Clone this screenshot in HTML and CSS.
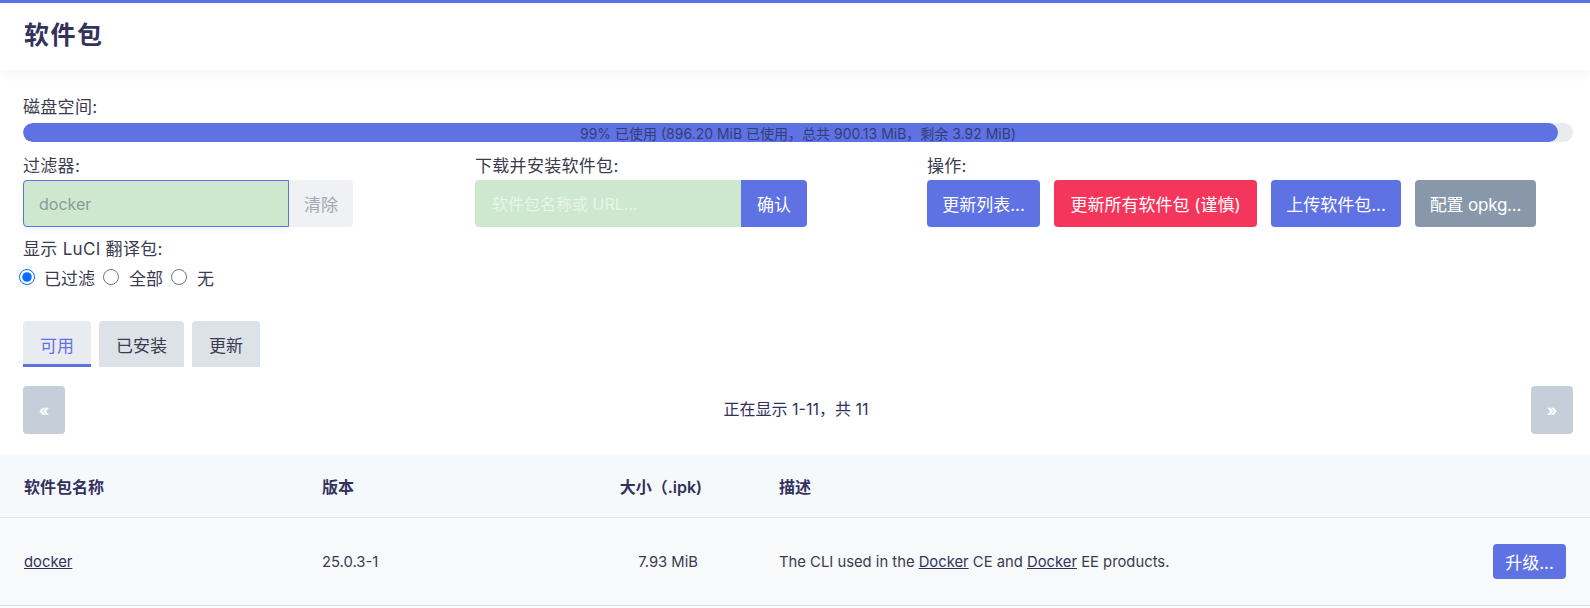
FILE: index.html
```html
<!DOCTYPE html>
<html lang="zh-CN">
<head>
<meta charset="utf-8">
<title>软件包</title>
<link rel="stylesheet" href="styles.css">
</head>
<body>
<header class="page-head">
  <h2 class="page-title">软件包</h2>
</header>
<main class="content">
  <div class="disk">
    <div class="lbl">磁盘空间:</div>
    <div class="progress">
      <div class="progress-fill" style="width:99.03%"></div>
      <span class="progress-text">99% 已使用 (896.20 MiB 已使用，总共 900.13 MiB，剩余 3.92 MiB)</span>
    </div>
  </div>

  <div class="controls">
    <div class="col">
      <div class="lbl">过滤器:</div>
      <div class="input-group">
        <input class="filter-input" type="text" value="docker">
        <button class="btn-clear" type="button">清除</button>
      </div>
      <div class="lbl lbl-luci">显示 LuCI 翻译包:</div>
      <div class="radios">
        <label class="radio"><input type="radio" name="i18n" checked><span>已过滤</span></label>
        <label class="radio"><input type="radio" name="i18n"><span>全部</span></label>
        <label class="radio"><input type="radio" name="i18n"><span>无</span></label>
      </div>
    </div>
    <div class="col">
      <div class="lbl">下载并安装软件包:</div>
      <div class="input-group">
        <input class="dl-input" type="text" placeholder="软件包名称或 URL...">
        <button class="btn btn-primary btn-attach" type="button">确认</button>
      </div>
    </div>
    <div class="col">
      <div class="lbl">操作:</div>
      <div class="actions">
        <button class="btn btn-primary" type="button">更新列表...</button>
        <button class="btn btn-danger" type="button">更新所有软件包 (谨慎)</button>
        <button class="btn btn-primary" type="button">上传软件包...</button>
        <button class="btn btn-neutral" type="button">配置 opkg...</button>
      </div>
    </div>
  </div>

  <ul class="tabs">
    <li class="tab active">可用</li>
    <li class="tab">已安装</li>
    <li class="tab">更新</li>
  </ul>

  <div class="pager">
    <button class="pager-btn" type="button">«</button>
    <div class="pager-text">正在显示 1-11，共 11</div>
    <button class="pager-btn" type="button">»</button>
  </div>
</main>

<div class="table">
  <div class="tr th">
    <div class="cell">软件包名称</div>
    <div class="cell">版本</div>
    <div class="cell cell-size">大小（.ipk)</div>
    <div class="cell cell-desc">描述</div>
    <div class="cell cell-act"></div>
  </div>
  <div class="tr td">
    <div class="cell"><a class="link" href="#">docker</a></div>
    <div class="cell">25.0.3-1</div>
    <div class="cell cell-size">7.93 MiB</div>
    <div class="cell cell-desc">The CLI used in the <a class="link" href="#">Docker</a> CE and <a class="link" href="#">Docker</a> EE products.</div>
    <div class="cell cell-act"><button class="btn btn-primary btn-sm" type="button">升级...</button></div>
  </div>
</div>
</body>
</html>
```

FILE: styles.css
```css
* { box-sizing: border-box; }

html, body {
  margin: 0;
  padding: 0;
  background: #fff;
}

body {
  font-family: "Inter", "Noto Sans CJK SC", sans-serif;
  color: #32325d;
  font-size: 16px;
  overflow: hidden;
}

.page-head {
  border-top: 3px solid #5e72e4;
  height: 70px;
  display: flex;
  align-items: center;
  padding-left: 24px;
  background: #fff;
  box-shadow: 0 5px 12px rgba(40, 50, 90, 0.045);
  position: relative;
}

.page-title {
  margin: 0;
  font-size: 25px;
  font-weight: 700;
  letter-spacing: 1.5px;
  color: #32325d;
  line-height: 1;
  transform: translateY(-1px);
}

.content {
  padding: 0 17px 0 23px;
}

.lbl {
  font-size: 17px;
  line-height: 20px;
  height: 20px;
  color: #3b3b4f;
  letter-spacing: 0.3px;
}

.disk {
  padding-top: 27px;
}

.progress {
  position: relative;
  margin-top: 6px;
  height: 19px;
  border-radius: 10px;
  background: #e9ecef;
  overflow: hidden;
}

.progress-fill {
  height: 100%;
  border-radius: 10px;
  background: #5e72e4;
}

.progress-text {
  position: absolute;
  inset: 0;
  display: flex;
  align-items: center;
  justify-content: center;
  font-size: 14px;
  color: #2e3466;
  opacity: 0.85;
}

.controls {
  display: grid;
  grid-template-columns: 452px 452px 1fr;
  margin-top: 14px;
}

.input-group {
  display: flex;
  margin-top: 4px;
  height: 47px;
}

.filter-input {
  width: 266px;
  height: 47px;
  border: 1px solid #5e72e4;
  border-radius: 4px 0 0 4px;
  background: #cde8cf;
  padding: 0 15px;
  font-family: inherit;
  font-size: 16px;
  color: #8c9a98;
  outline: none;
  box-shadow: 0 3px 8px rgba(50, 50, 93, 0.06);
}

.btn-clear {
  width: 64px;
  height: 47px;
  border: 0;
  border-radius: 0 4px 4px 0;
  background: #f0f1f3;
  color: #a3a9b4;
  font-family: inherit;
  font-size: 17px;
  padding: 0;
}

.lbl-luci {
  margin-top: 12px;
}

.radios {
  display: flex;
  align-items: center;
  margin-top: 8px;
  margin-left: -4px;
  height: 20px;
}

.radio {
  display: flex;
  align-items: center;
  font-size: 17px;
  color: #3b3b4f;
  margin-right: 8px;
}

.radio input {
  width: 16px;
  height: 16px;
  margin: 0 9px 0 0;
  accent-color: #0a6cff;
}

.radio + .radio input {
  margin-right: 10px;
}

.dl-input {
  width: 266px;
  height: 47px;
  border: 0;
  border-radius: 4px 0 0 4px;
  background: #cde8cf;
  padding: 0 17px;
  font-family: inherit;
  font-size: 16px;
  outline: none;
}

.dl-input::placeholder {
  color: #e9f4ea;
}

.btn {
  height: 47px;
  border: 0;
  border-radius: 4px;
  color: #fff;
  font-family: inherit;
  font-size: 17px;
  padding: 0 15px;
  white-space: nowrap;
  cursor: pointer;
}

.btn-attach {
  width: 66px;
  padding: 0;
  border-radius: 0 4px 4px 0;
}

.btn-primary { background: #5e72e4; }
.btn-danger { background: #f5365c; }
.btn-neutral { background: #8898aa; }

.actions {
  display: flex;
  gap: 14px;
  margin-top: 4px;
}

.actions .btn { padding: 0; }
.actions .btn:nth-child(1) { width: 113px; }
.actions .btn:nth-child(2) { width: 203px; }
.actions .btn:nth-child(3) { width: 130px; }
.actions .btn:nth-child(4) { width: 121px; letter-spacing: -0.2px; }

.tabs {
  list-style: none;
  display: flex;
  gap: 8px;
  margin: 34px 0 0;
  padding: 0;
}

.tab {
  height: 46px;
  padding: 0 17px;
  display: flex;
  align-items: center;
  background: #dde2e8;
  border-radius: 4px 4px 0 0;
  font-size: 17px;
  color: #3b3b4f;
}

.tab.active {
  background: #e8ecf0;
  color: #5e72e4;
  border-bottom: 3px solid #5e72e4;
  padding-top: 3px;
}

.pager {
  display: flex;
  align-items: center;
  justify-content: space-between;
  margin-top: 19px;
}

.pager-btn {
  width: 42px;
  height: 48px;
  border: 0;
  border-radius: 4px;
  background: #c6cfd9;
  color: #fff;
  font-family: inherit;
  font-size: 16px;
  font-weight: 700;
  padding: 0;
}

.pager-text {
  font-size: 16px;
  color: #32325d;
  transform: translate(-2px, -2px);
}

.table {
  margin-top: 21px;
}

.tr {
  display: grid;
  grid-template-columns: 298px 298px 132px 1fr auto;
  align-items: center;
}

.th {
  height: 62px;
  background: #f6f9fc;
  font-size: 16px;
  font-weight: 600;
  color: #32325d;
}

.td {
  height: 89px;
  background: #f8f9fb;
  border-top: 1px solid #e3e6eb;
  border-bottom: 1px solid #dde1e6;
  font-size: 14.8px;
  color: #3b3b4f;
}

.cell {
  padding-left: 24px;
}

.cell-size {
  padding-left: 0;
  padding-right: 26px;
  text-align: right;
}

.td .cell-size {
  padding-right: 30px;
}

.cell-desc {
  padding-left: 51px;
}

.cell-act {
  padding-right: 24px;
}

.link {
  color: #32325d;
  text-decoration: underline;
}

.btn-sm {
  height: 35px;
  width: 73px;
  padding: 0;
  font-size: 17px;
}
```
